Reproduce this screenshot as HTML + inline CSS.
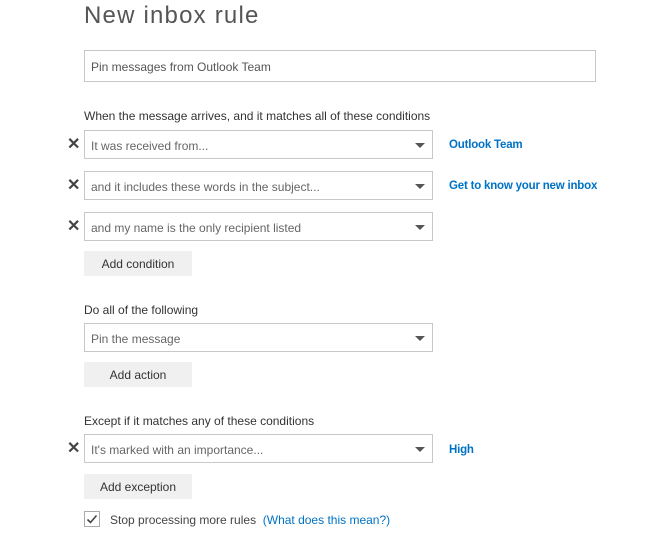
<!DOCTYPE html>
<html><head><style>
body{margin:0;width:670px;height:541px;background:#fff;font-family:"Liberation Sans",sans-serif;position:relative;overflow:hidden}
.a{position:absolute}
h1{position:absolute;left:84px;top:2px;margin:0;font-weight:normal;font-size:24px;color:#555;letter-spacing:1.2px}
.inp{position:absolute;left:84px;width:510px;height:30px;border:1px solid #c8c8c8;font-size:12px;color:#555;line-height:32px;padding-left:6px;box-sizing:content-box}
.dd{position:absolute;left:84px;width:349px;height:28px;border:1px solid #c8c8c8;font-size:12px;color:#666;line-height:30px;padding-left:6px;box-sizing:border-box}
.dd:after{content:"";position:absolute;right:7px;top:12px;border-left:5px solid transparent;border-right:5px solid transparent;border-top:5px solid #555}
.lbl{position:absolute;left:84px;font-size:12px;color:#333}
.btn{position:absolute;left:84px;width:108px;height:25px;background:#f0f0f0;font-size:12px;color:#333;line-height:26px;text-align:center}
.x{position:absolute;left:67px;font-size:16px;font-weight:bold;color:#444;line-height:16px}
.lnk{position:absolute;left:449px;font-size:11.5px;color:#0072c6;font-weight:bold;letter-spacing:-0.2px}
</style></head><body>
<h1>New inbox rule</h1>
<div class="inp" style="top:50px;width:504px;height:30px">Pin messages from Outlook Team</div>
<div class="lbl" style="top:109px">When the message arrives, and it matches all of these conditions</div>
<div class="x" style="top:137px">✕</div>
<div class="dd" style="top:130px;height:29px">It was received from...</div>
<div class="lnk" style="top:139px">Outlook Team</div>
<div class="x" style="top:178px">✕</div>
<div class="dd" style="top:171px;height:29px">and it includes these words in the subject...</div>
<div class="lnk" style="top:180px">Get to know your new inbox</div>
<div class="x" style="top:219px">✕</div>
<div class="dd" style="top:212px;height:29px">and my name is the only recipient listed</div>
<div class="btn" style="top:251px">Add condition</div>
<div class="lbl" style="top:303px">Do all of the following</div>
<div class="dd" style="top:323px;height:29px">Pin the message</div>
<div class="btn" style="top:362px">Add action</div>
<div class="lbl" style="top:414px">Except if it matches any of these conditions</div>
<div class="x" style="top:441px">✕</div>
<div class="dd" style="top:434px;height:29px">It's marked with an importance...</div>
<div class="lnk" style="top:444px">High</div>
<div class="btn" style="top:474px">Add exception</div>
<div class="a" style="left:84px;top:511px;width:14px;height:14px;border:1px solid #aaa"><svg width="14" height="14" viewBox="0 0 14 14"><path d="M2.5 7.5l3 3 6-7" fill="none" stroke="#444" stroke-width="1.6"/></svg></div>
<div class="a" style="left:110px;top:513px;font-size:12px;color:#444">Stop processing more rules &nbsp;<span style="color:#0072c6">(What does this mean?)</span></div>
</body></html>
